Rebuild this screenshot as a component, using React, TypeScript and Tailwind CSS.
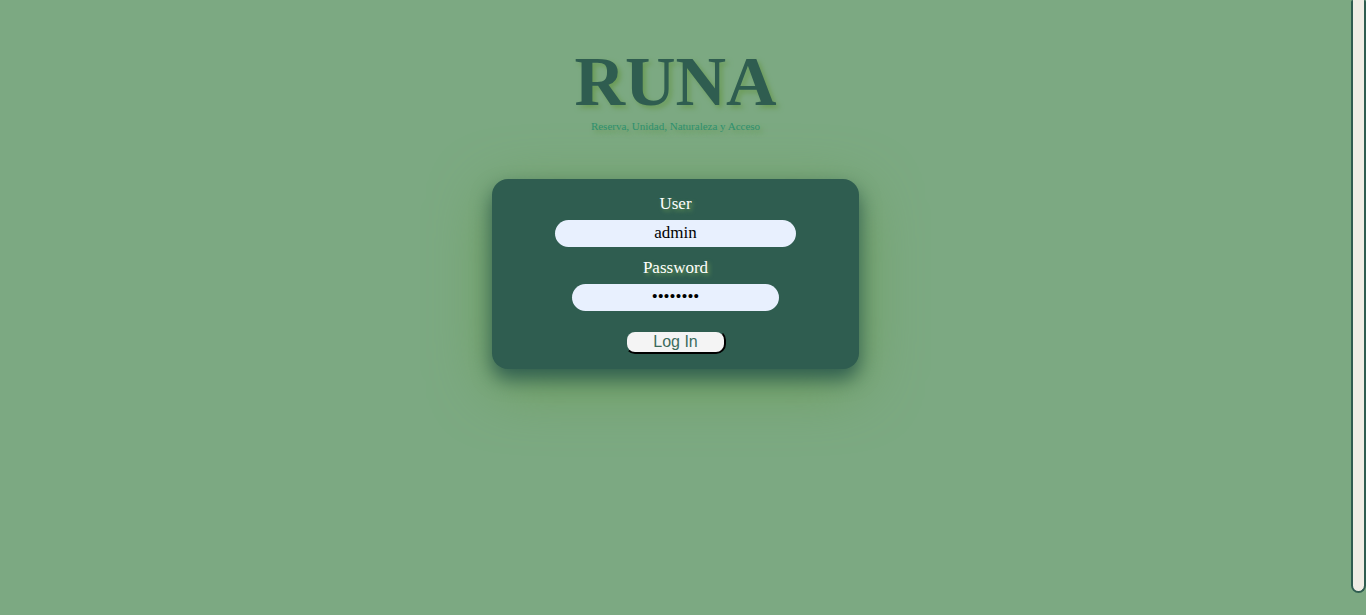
import { useState } from "react";

function Brand() {
  return (
    <header className="flex flex-col items-center [text-shadow:3px_3px_5px_#6b9b56]">
      <h1 className="text-[70px] leading-[76px] font-bold text-[#2f5d50]">RUNA</h1>
      <p className="text-[11px] leading-3 text-[#2f9070]">Reserva, Unidad, Naturaleza y Acceso</p>
    </header>
  );
}

function LoginForm() {
  const [user, setUser] = useState("admin");
  const [password, setPassword] = useState("password");
  const label = "text-[17px] leading-5 text-white [text-shadow:2px_2px_4px_#6b9b56]";
  const field =
    "h-[27px] rounded-full bg-[#e8f0fe] pb-[2px] text-center text-[17px] text-black outline-none";

  return (
    <form
      onSubmit={(e) => e.preventDefault()}
      className="mt-[47px] flex w-[367px] max-w-full flex-col items-center rounded-2xl bg-[#2f5d50] px-4 pt-[15px] pb-[15px] shadow-[0_10px_20px_#2f5d50,0_16px_60px_#6b9b56]"
    >
      <label htmlFor="user" className={label}>User</label>
      <input
        id="user"
        type="text"
        value={user}
        onChange={(e) => setUser(e.target.value)}
        className={field + " mt-[6px] w-[241px]"}
      />
      <label htmlFor="password" className={label + " mt-[11px]"}>Password</label>
      <input
        id="password"
        type="password"
        value={password}
        onChange={(e) => setPassword(e.target.value)}
        className={field + " mt-[6px] w-[207px]"}
      />
      <button
        type="submit"
        className="mt-[19px] h-6 rounded-[10px] border-2 border-t-[#2f5d50] border-r-black border-b-black border-l-[#2f5d50] bg-[#f4f4f4] px-[26px] pb-px font-['Liberation_Sans',Arial,sans-serif] text-base leading-4 text-[#3b6b5c]"
      >
        Log In
      </button>
    </form>
  );
}

export default function App() {
  return (
    <div className="flex h-screen bg-[#7ca982] font-['Liberation_Serif','Times_New_Roman',serif]">
      <main className="flex min-w-0 flex-1 flex-col items-center pt-11">
        <Brand />
        <LoginForm />
      </main>
      <div aria-hidden="true" className="w-[15px] shrink-0 pb-[22px]">
        <div className="h-full rounded-t-[2px] rounded-b-lg border-2 border-t-0 border-[#2f5d50] bg-[#f0ede5]" />
      </div>
    </div>
  );
}
